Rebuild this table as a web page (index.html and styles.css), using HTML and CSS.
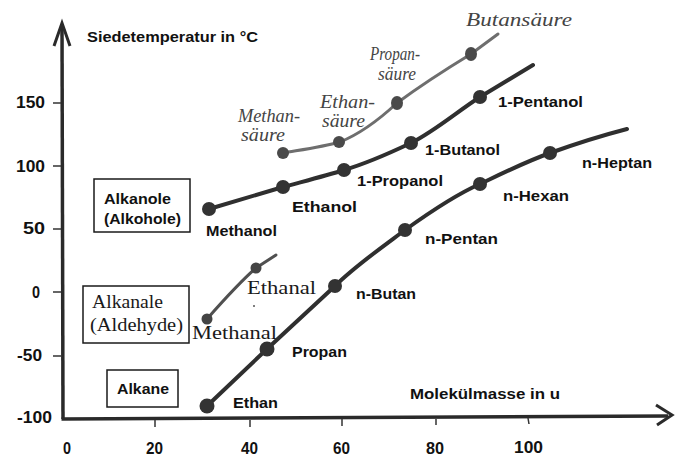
FILE: index.html
```html
<!DOCTYPE html>
<html lang="de">
<head>
<meta charset="utf-8">
<title>Siedetemperatur</title>
<link rel="stylesheet" href="styles.css">
</head>
<body>
<div class="chart">
<svg width="684" height="476" viewBox="0 0 684 476" xmlns="http://www.w3.org/2000/svg">
  <!-- axes -->
  <g class="axis">
    <line x1="62" y1="24" x2="63" y2="419"/>
    <line x1="61.5" y1="419" x2="668" y2="416"/>
    <polyline points="54,46 62,23 70,46" class="arrow"/>
    <polyline points="656,405 672,415 657,425" class="arrow"/>
  </g>
  <g class="tick">
    <line x1="53" y1="103" x2="61" y2="103"/>
    <line x1="53" y1="166" x2="61" y2="166"/>
    <line x1="53" y1="229" x2="61" y2="229"/>
    <line x1="53" y1="292" x2="61" y2="292"/>
    <line x1="53" y1="356" x2="61" y2="356"/>
    <line x1="155" y1="420" x2="155" y2="427"/>
    <line x1="250" y1="420" x2="250" y2="427"/>
    <line x1="342" y1="419" x2="342" y2="426"/>
    <line x1="436" y1="419" x2="436" y2="425"/>
    <line x1="528" y1="418" x2="529" y2="424"/>
  </g>
  <g class="num">
    <text x="16" y="108" textLength="29" lengthAdjust="spacingAndGlyphs">150</text>
    <text x="16" y="172" textLength="29" lengthAdjust="spacingAndGlyphs">100</text>
    <text x="23" y="234" textLength="22" lengthAdjust="spacingAndGlyphs">50</text>
    <text x="32" y="298" textLength="8" lengthAdjust="spacingAndGlyphs">0</text>
    <text x="17" y="361" textLength="25" lengthAdjust="spacingAndGlyphs">-50</text>
    <text x="17" y="423" textLength="35" lengthAdjust="spacingAndGlyphs">-100</text>
    <text x="63" y="454" textLength="8" lengthAdjust="spacingAndGlyphs">0</text>
    <text x="146" y="454" textLength="17" lengthAdjust="spacingAndGlyphs">20</text>
    <text x="241" y="454" textLength="17" lengthAdjust="spacingAndGlyphs">40</text>
    <text x="333" y="454" textLength="17" lengthAdjust="spacingAndGlyphs">60</text>
    <text x="426" y="454" textLength="18" lengthAdjust="spacingAndGlyphs">80</text>
    <text x="514" y="453" textLength="29" lengthAdjust="spacingAndGlyphs">100</text>
  </g>

  <!-- axis titles -->
  <text class="lbl" x="87" y="42" textLength="171" lengthAdjust="spacingAndGlyphs">Siedetemperatur in °C</text>
  <text class="lbl" x="410" y="399" textLength="150" lengthAdjust="spacingAndGlyphs">Molekülmasse in u</text>

  <!-- boxes -->
  <rect class="box" x="94" y="179" width="96" height="53"/>
  <rect class="box" x="83" y="286" width="106" height="57"/>
  <rect class="box" x="107" y="370" width="71" height="37"/>
  <text class="lbl" x="104" y="204" textLength="67" lengthAdjust="spacingAndGlyphs">Alkanole</text>
  <text class="lbl" x="104" y="224" textLength="77" lengthAdjust="spacingAndGlyphs">(Alkohole)</text>
  <text class="lbl" x="117" y="394" textLength="52" lengthAdjust="spacingAndGlyphs">Alkane</text>
  <text class="serif" x="92" y="308" textLength="71" lengthAdjust="spacingAndGlyphs">Alkanale</text>
  <text class="serif" x="90" y="331" textLength="93" lengthAdjust="spacingAndGlyphs">(Aldehyde)</text>

  <!-- Carbonsäuren (handwritten, grey) -->
  <path class="acid" d="M283,153 C300,150 322,147 340,142 C362,133 382,117 397,103 C420,86 448,68 471,54 L498,34"/>
  <g class="acid-dot">
    <circle cx="283" cy="153" r="6"/>
    <circle cx="339" cy="142" r="6"/>
    <ellipse cx="397" cy="103" rx="6" ry="7"/>
    <ellipse cx="471" cy="54" rx="6" ry="7"/>
  </g>
  <g class="hand">
    <text x="238" y="122" textLength="62" lengthAdjust="spacingAndGlyphs">Methan-</text>
    <text x="241" y="141" textLength="44" lengthAdjust="spacingAndGlyphs">säure</text>
    <text x="320" y="108" textLength="55" lengthAdjust="spacingAndGlyphs">Ethan-</text>
    <text x="322" y="127" textLength="43" lengthAdjust="spacingAndGlyphs">säure</text>
    <text x="370" y="60" textLength="50" lengthAdjust="spacingAndGlyphs">Propan-</text>
    <text x="378" y="80" textLength="38" lengthAdjust="spacingAndGlyphs">säure</text>
    <text x="466" y="26" textLength="106" lengthAdjust="spacingAndGlyphs">Butansäure</text>
  </g>

  <!-- Alkanole -->
  <path class="series" d="M209,209 L283,187 C305,181 325,176 344,170 C368,163 392,152 411,143 C435,131 458,111 480,97 L533,65"/>
  <g class="dot">
    <circle cx="209" cy="209" r="7"/>
    <circle cx="283" cy="187" r="7"/>
    <circle cx="344" cy="170" r="7"/>
    <circle cx="411" cy="143" r="7"/>
    <circle cx="480" cy="97" r="7"/>
  </g>
  <g class="lbl">
    <text x="206" y="236" textLength="71" lengthAdjust="spacingAndGlyphs">Methanol</text>
    <text x="292" y="212" textLength="65" lengthAdjust="spacingAndGlyphs">Ethanol</text>
    <text x="357" y="186" textLength="86" lengthAdjust="spacingAndGlyphs">1-Propanol</text>
    <text x="425" y="155" textLength="75" lengthAdjust="spacingAndGlyphs">1-Butanol</text>
    <text x="498" y="107" textLength="85" lengthAdjust="spacingAndGlyphs">1-Pentanol</text>
  </g>

  <!-- Alkanale -->
  <path class="ald" d="M207,319 C222,302 240,282 256,268 L276,255"/>
  <g class="ald-dot">
    <circle cx="207" cy="319" r="5.5"/>
    <circle cx="256" cy="268" r="5.5"/>
  </g>
  <circle cx="254" cy="306" r="1" class="speck"/>
  <g class="serif">
    <text x="247" y="294" textLength="69" lengthAdjust="spacingAndGlyphs">Ethanal</text>
    <text x="192" y="339" textLength="85" lengthAdjust="spacingAndGlyphs">Methanal</text>
  </g>

  <!-- Alkane -->
  <path class="series" d="M207,406 L267,349 L335,286 C355,266 385,245 405,230 C430,212 455,195 480,184 C505,172 525,162 550,153 C575,144 600,136 627,129"/>
  <g class="dot">
    <circle cx="207" cy="406" r="7.5"/>
    <circle cx="267" cy="349" r="7.5"/>
    <circle cx="335" cy="286" r="7"/>
    <circle cx="405" cy="230" r="7"/>
    <circle cx="480" cy="184" r="7"/>
    <circle cx="550" cy="153" r="7"/>
  </g>
  <g class="lbl">
    <text x="233" y="408" textLength="45" lengthAdjust="spacingAndGlyphs">Ethan</text>
    <text x="292" y="357" textLength="55" lengthAdjust="spacingAndGlyphs">Propan</text>
    <text x="356" y="299" textLength="60" lengthAdjust="spacingAndGlyphs">n-Butan</text>
    <text x="425" y="244" textLength="73" lengthAdjust="spacingAndGlyphs">n-Pentan</text>
    <text x="503" y="201" textLength="66" lengthAdjust="spacingAndGlyphs">n-Hexan</text>
    <text x="582" y="168" textLength="70" lengthAdjust="spacingAndGlyphs">n-Heptan</text>
  </g>
</svg>
</div>
</body>
</html>
```
FILE: styles.css
```css
html, body {
  margin: 0;
  padding: 0;
  background: #ffffff;
}

.chart {
  width: 684px;
  height: 476px;
  overflow: hidden;
  background: #ffffff;
}

.chart svg {
  display: block;
}

.axis line {
  stroke: #2a2a2a;
  stroke-width: 3.5;
}

.axis .arrow {
  fill: none;
  stroke: #2a2a2a;
  stroke-width: 3;
  stroke-linejoin: miter;
}

.tick line {
  stroke: #333333;
  stroke-width: 1.5;
}

.num {
  font-family: "Liberation Sans", Arial, sans-serif;
  font-weight: bold;
  font-size: 16px;
  fill: #111111;
}

.lbl {
  font-family: "Liberation Sans", Arial, sans-serif;
  font-weight: bold;
  font-size: 15px;
  fill: #111111;
}

.serif {
  font-family: "Liberation Serif", "Times New Roman", serif;
  font-size: 19px;
  fill: #1a1a1a;
}

.hand {
  font-family: "Liberation Serif", "DejaVu Serif", serif;
  font-style: italic;
  font-size: 18px;
  fill: #444444;
}

.box {
  fill: none;
  stroke: #1a1a1a;
  stroke-width: 1.5;
}

.series {
  fill: none;
  stroke: #2f2f2f;
  stroke-width: 4;
  stroke-linejoin: round;
  stroke-linecap: round;
}

.dot circle {
  fill: #333333;
}

.acid {
  fill: none;
  stroke: #6e6e6e;
  stroke-width: 3;
  stroke-linecap: round;
}

.acid-dot circle,
.acid-dot ellipse {
  fill: #4a4a4a;
}

.ald {
  fill: none;
  stroke: #505050;
  stroke-width: 3;
  stroke-linecap: round;
}

.ald-dot circle {
  fill: #444444;
}

.speck {
  fill: #555555;
}
```
